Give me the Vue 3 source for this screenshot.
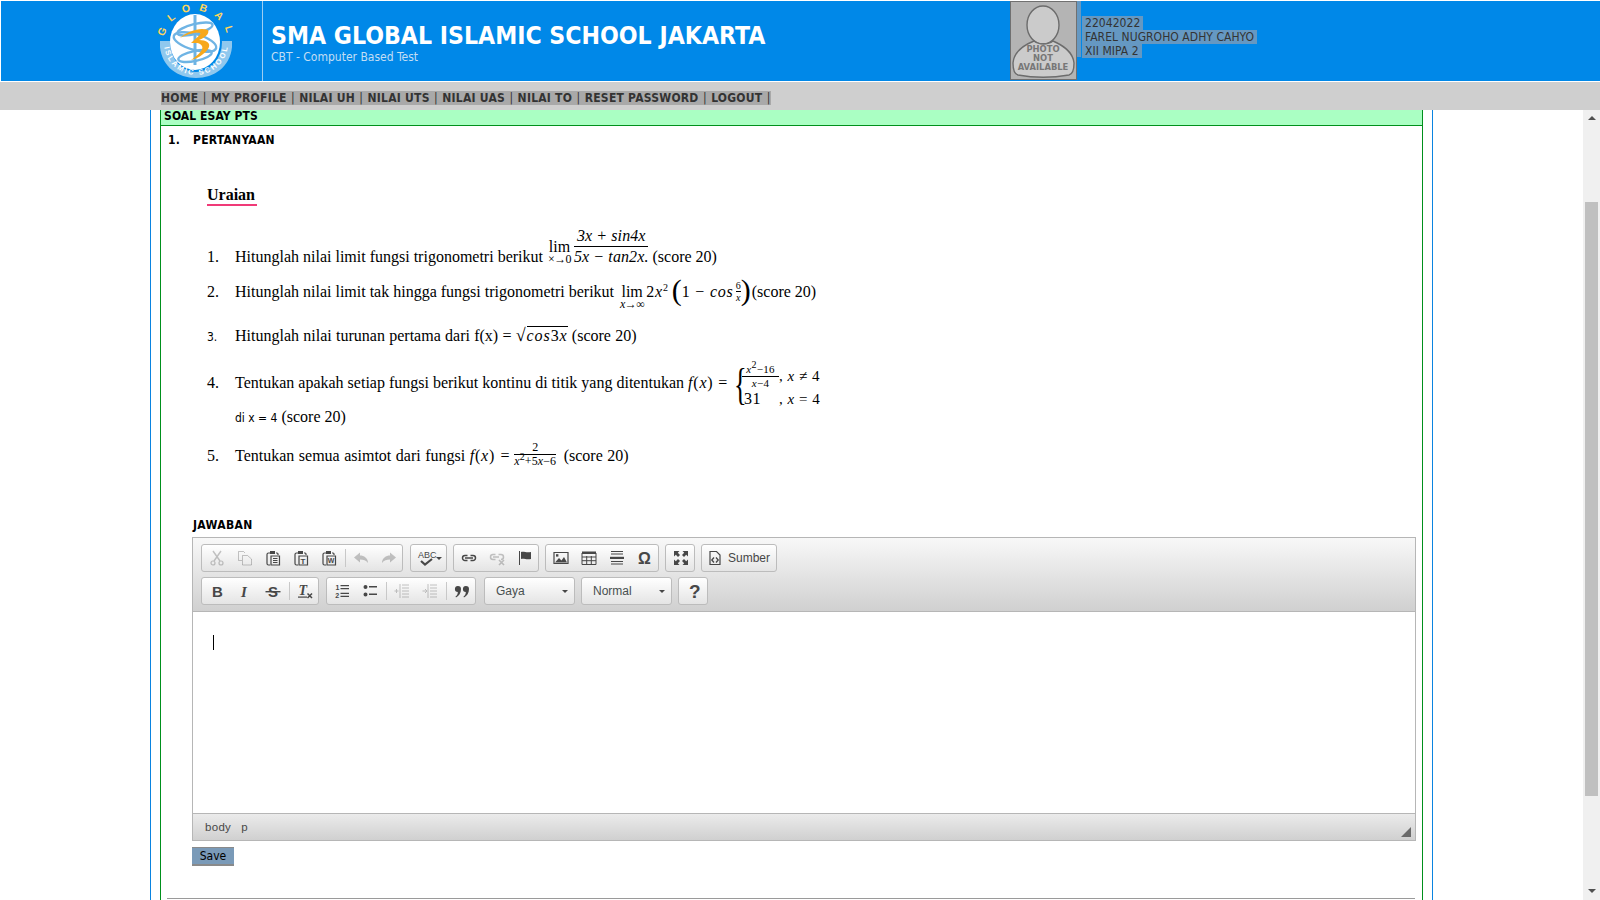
<template>
  <div class="page">
    <header class="top">
      <div class="logo-cell">
        <svg width="76" height="76" viewBox="0 0 76 76">
          <defs>
            <path id="arcTop" d="M4 38 A31 31 0 0 1 68 38" />
            <path id="arcBot" d="M6 38 A30 30 0 0 0 66 38" />
          </defs>
          <path d="M0 36 H72 V42 C70 62 54 73 36 73 C18 73 2 62 0 42 Z" fill="#8fc8ee" />
          <ellipse cx="36" cy="37" rx="26" ry="30" fill="#0088e8" />
          <ellipse cx="35" cy="37" rx="25" ry="28" fill="#fff" />
          <g fill="none" stroke="#6fb4e4" stroke-width="2.4">
            <ellipse cx="35" cy="24" rx="18" ry="5" transform="rotate(-14 35 24)" />
            <ellipse cx="35" cy="37" rx="22" ry="8" transform="rotate(16 35 37)" />
            <ellipse cx="35" cy="51" rx="17" ry="5" transform="rotate(-12 35 51)" />
            <path d="M35 10 V60" stroke-width="3" />
          </g>
          <path d="M20 33 C28 26 40 22 48 25 C50 29 44 33 39 35 C46 35 52 38 48 44 C44 50 36 54 31 55 C38 50 44 45 42 41 C40 37 35 38 31 38 C36 33 42 29 40 28 C34 27 26 30 20 33 Z" fill="#f7a81b" />
          <text font-family="Liberation Sans, sans-serif" font-size="10.5" font-weight="700" fill="#ffd65c" letter-spacing="8">
            <textPath href="#arcTop" startOffset="6">GLOBAL</textPath>
          </text>
          <text font-family="Liberation Sans, sans-serif" font-size="7.5" font-weight="700" fill="#fff" letter-spacing="1.6">
            <textPath href="#arcBot" startOffset="4" dominant-baseline="middle">ISLAMIC SCHOOL</textPath>
          </text>
        </svg>
      </div>
      <div class="brand">
        <h1>SMA GLOBAL ISLAMIC SCHOOL JAKARTA</h1>
        <p>CBT - Computer Based Test</p>
      </div>
      <div class="photo">
        <svg width="67" height="79" viewBox="0 0 67 79">
          <rect width="67" height="79" fill="#b4b4b4" />
          <rect x="0.5" y="0.5" width="66" height="78" fill="none" stroke="#707070" />
          <ellipse cx="33" cy="24" rx="16" ry="19" fill="#cbcbcb" stroke="#6c6c6c" stroke-width="1.4" />
          <path d="M24 40 C14 44 4 50 3 62 C3 68 4 73 8 74 C24 77 42 77 59 74 C63 73 64 68 64 62 C63 50 52 44 43 40 C38 44 29 44 24 40 Z" fill="#cbcbcb" stroke="#6c6c6c" stroke-width="1.4" />
          <g font-family="DejaVu Sans, sans-serif" font-size="8.4" font-weight="700" fill="#777" text-anchor="middle">
            <text x="33" y="51">PHOTO</text>
            <text x="33" y="60">NOT</text>
            <text x="33" y="69">AVAILABLE</text>
          </g>
        </svg>
      </div>
      <div class="strip"></div>
      <div class="user">
        <span>22042022</span>
        <span>FAREL NUGROHO ADHY CAHYO</span>
        <span>XII MIPA 2</span>
      </div>
    </header>

    <nav class="menu">
      <div class="menu-inner">
        <template v-for="item in menu" :key="item">
          <a>{{ item }}</a><i>|</i>
        </template>
      </div>
    </nav>

    <div class="view">
      <main class="scroller">
        <div class="frame">
          <div class="box">
            <div class="box-title">SOAL ESAY PTS</div>
            <div class="pertanyaan"><b>1.</b><b>PERTANYAAN</b></div>

            <div class="soal">
              <div class="heading"><span>Uraian</span></div>

              <div class="q q1">
                <span class="n">1.</span>
                <span class="t">Hitunglah nilai limit fungsi trigonometri berikut
                  <span class="lim l1">lim<small>×→0</small></span><span class="frac f1"><span><i>3x + sin4x</i></span><span><i>5x − tan2x.</i></span></span>
                  (score 20)</span>
              </div>

              <div class="q q2">
                <span class="n">2.</span>
                <span class="t">Hitunglah nilai limit tak hingga fungsi trigonometri berikut
                  <span class="lim l2">lim<small><i>x</i>→∞</small></span>
                  <span class="m">2<i>x</i><sup>2</sup></span>
                  <span class="paren open">(</span><span class="m">1 − <i>cos</i></span><span class="frac f2"><span>6</span><span><i>x</i></span></span><span class="paren close">)</span>
                  (score 20)</span>
              </div>

              <div class="q q3">
                <span class="n sans">3.</span>
                <span class="t wide">Hitunglah nilai turunan pertama dari f(x) =
                  <span class="root"><b>√</b><span class="rad"><i>cos</i>3<i>x</i></span></span>
                  (score 20)</span>
              </div>

              <div class="q q4">
                <span class="n">4.</span>
                <span class="t">Tentukan apakah setiap fungsi berikut kontinu di titik yang ditentukan
                  <span class="m"><i>f</i>(<i>x</i>) =</span>
                  <span class="cases">
                    <span class="brace">{</span>
                    <span class="case-grid">
                      <span class="frac f3"><span><i>x</i><sup>2</sup>−16</span><span><i>x</i>−4</span></span>
                      <span class="cond">, <i>x</i> ≠ 4</span>
                      <span class="num31">31</span>
                      <span class="cond">, <i>x</i> = 4</span>
                    </span>
                  </span>
                </span>
              </div>
              <div class="q q4b">
                <span class="n"></span>
                <span class="t"><span class="sans">di x = 4</span> (score 20)</span>
              </div>

              <div class="q q5">
                <span class="n">5.</span>
                <span class="t wide2">Tentukan semua asimtot dari fungsi
                  <span class="m"><i>f</i>(<i>x</i>) =</span>
                  <span class="frac f4"><span>2</span><span><i>x</i><sup>2</sup>+5<i>x</i>−6</span></span>
                  (score 20)</span>
              </div>
            </div>

            <div class="jawaban">JAWABAN</div>

            <div class="editor">
              <div class="toolbar">
                <div v-for="(row, r) in toolbar" :key="r" class="tool-row">
                  <template v-for="(group, g) in row" :key="g">
                    <div v-if="group.combo" class="combo">
                      <span>{{ group.combo }}</span><em></em>
                    </div>
                    <div v-else class="group" :class="{ first: g === 0 }">
                      <template v-for="(item, i) in group.items" :key="i">
                        <span v-if="item === 'sep'" class="sep"></span>
                        <span v-else class="btn" :class="{ off: item.off, arrow: item.arrow, label: item.label }">
                          <svg width="16" height="16" viewBox="0 0 16 16" v-html="icons[item.id]"></svg>
                          <em v-if="item.arrow"></em>
                          <span v-if="item.label">{{ item.label }}</span>
                        </span>
                      </template>
                    </div>
                  </template>
                </div>
              </div>
              <div class="editable"><div class="caret"></div></div>
              <div class="status">
                <span>body</span><span>p</span>
                <svg class="grip" width="10" height="10" viewBox="0 0 10 10"><path d="M10 0 V10 H0 Z" fill="#6a6a6a" /></svg>
              </div>
            </div>

            <button class="save">Save</button>
            <div class="rule"></div>
          </div>
        </div>
      </main>
      <aside class="scrollbar">
        <div class="up"></div>
        <div class="thumb"></div>
        <div class="down"></div>
      </aside>
    </div>
  </div>
</template>

<script setup>
const menu = ['HOME', 'MY PROFILE', 'NILAI UH', 'NILAI UTS', 'NILAI UAS', 'NILAI TO', 'RESET PASSWORD', 'LOGOUT']

const line = (d, w = 1.2) => `<path d="${d}" fill="none" stroke="#474747" stroke-width="${w}"/>`
const fill = (d) => `<path d="${d}" fill="#474747"/>`
const glyph = (t, x, y, size, extra = '') =>
  `<text x="${x}" y="${y}" font-family="Liberation Sans, sans-serif" font-size="${size}" font-weight="700" fill="#474747" ${extra}>${t}</text>`
const board = line('M5 3 H3.5 Q2 3 2 4.5 V13.5 Q2 15 3.5 15 H5 M11 3 H12 Q13 3 13 4 V5') + fill('M5 1 H10 V4 H5 Z')

const icons = {
  cut: line('M4 1 L11 11 M12 1 L5 11', 1.4) + line('M6 13 a2 2 0 1 1 -4 0 a2 2 0 1 1 4 0 M14 13 a2 2 0 1 1 -4 0 a2 2 0 1 1 4 0', 1.2),
  copy: line('M1.5 1.5 H6.5 L8 3 M1.5 1.5 V10.5 H5 M5.5 5.5 H10.5 L14.5 9 V15 H5.5 Z', 1),
  paste: board + line('M6 6 H14.5 V15 H6 Z', 1.2) + line('M8 8.5 H12.5 M8 10.5 H12.5 M8 12.5 H12.5', 1),
  pastetext: board + line('M6 6 H14.5 V15 H6 Z', 1.2) + glyph('T', 7.6, 13.6, 8),
  pasteword: board + line('M6 6 H14.5 V15 H6 Z', 1.2) + glyph('W', 6.8, 13.4, 7),
  undo: fill('M1 7.5 L7 2.5 V5.5 C11 5.5 15 8 15 13 C13 10 10.5 9.5 7 9.5 V12.5 Z'),
  redo: fill('M15 7.5 L9 2.5 V5.5 C5 5.5 1 8 1 13 C3 10 5.5 9.5 9 9.5 V12.5 Z'),
  spell: `<text x="0" y="8" font-family="Liberation Sans Narrow, Liberation Sans, sans-serif" font-size="9" fill="#474747">ABC</text>` + line('M3 11 L7 14.5 L14 9', 2.2),
  link: line('M6.5 5.5 H4 a2.5 2.5 0 0 0 0 5 H6.5 M9.5 5.5 H12 a2.5 2.5 0 0 1 0 5 H9.5', 1.5) + line('M4 8 H12', 1.5),
  unlink: line('M6.5 4.5 H4 a2.5 2.5 0 0 0 0 5 H6.5 M9.5 4.5 H12 a2.5 2.5 0 0 1 0 5', 1.5) + line('M4 7 H10', 1.5) + line('M10 10 L15 15 M15 10 L10 15', 1.6),
  flag: fill('M2 1 H3 V15 H2 Z M4 2 C7 1 9 3 14 2 V9 C9 10 7 8 4 9 Z'),
  image: line('M1 2.5 H15 V13.5 H1 Z', 1.2) + fill('M2 12.5 L6 8 L8.5 10.5 L11 7 L14 12.5 Z') + fill('M3 4.2 h2.4 v2.4 h-2.4 Z'),
  table: line('M1 3 H15 V14.5 H1 Z M1 7 H15 M1 10.7 H15 M5.7 6 V14.5 M10.3 6 V14.5', 1) + fill('M1 1.5 H15 V4 H1 Z'),
  hr: line('M2 1.5 H14 M2 4 H14 M2 11.5 H14 M2 14 H14', 1) + fill('M1 6.8 H15 V9 H1 Z'),
  omega: glyph('Ω', 1, 14, 16),
  max: fill('M1 1 H6.5 L4.8 2.7 L7 4.9 L5 6.9 L2.8 4.7 L1 6.5 Z M15 1 H9.5 L11.2 2.7 L9 4.9 L11 6.9 L13.2 4.7 L15 6.5 Z M1 15 H6.5 L4.8 13.3 L7 11.1 L5 9.1 L2.8 11.3 L1 9.5 Z M15 15 H9.5 L11.2 13.3 L9 11.1 L11 9.1 L13.2 11.3 L15 9.5 Z'),
  source: line('M3 1.5 H9.5 L13 5 V14.5 H3 Z', 1.2) + line('M7 7.5 L4.8 10 L7 12.5 M9 7.5 L11.2 10 L9 12.5', 1.3),
  bold: glyph('B', 3, 13.5, 15),
  italic: `<text x="4" y="13.5" font-family="Liberation Serif, serif" font-size="15" font-weight="700" font-style="italic" fill="#474747">I</text>`,
  strike: glyph('S', 3, 13.5, 15) + fill('M0.5 8 H15.5 V9.4 H0.5 Z'),
  clear: `<text x="1.5" y="12" font-family="Liberation Serif, serif" font-size="14" font-weight="700" font-style="italic" fill="#474747">T</text>` + fill('M1 13.5 H10 V14.7 H1 Z') + line('M10.5 10.5 L15 15 M15 10.5 L10.5 15', 1.5),
  ol: glyph('1', 1.5, 7, 7) + glyph('2', 1.2, 14.5, 7) + fill('M6.5 2 H15 V3.2 H6.5 Z M6.5 5 H15 V6.2 H6.5 Z M6.5 9.8 H15 V11 H6.5 Z M6.5 12.8 H15 V14 H6.5 Z'),
  ul: fill('M1.5 4 a2 2 0 1 1 4 0 a2 2 0 1 1 -4 0 Z M1.5 11.5 a2 2 0 1 1 4 0 a2 2 0 1 1 -4 0 Z M7 3 H15 V4.4 H7 Z M7 10.5 H15 V11.9 H7 Z'),
  outdent: line('M8 2 H15 M8 5 H15 M8 8 H15 M8 11 H15 M8 14 H15 M6 1 V15', 1) + line('M0.5 8 H4.5 M2.5 6 V10', 1),
  indent: line('M8 2 H15 M8 5 H15 M8 8 H15 M8 11 H15 M8 14 H15 M6 1 V15', 1) + line('M0.5 8 H4.5 M3 6 L5 8 L3 10', 1),
  quote: fill('M4 3 a3 3 0 0 1 3 3 C7 10 5 13 2 14.5 L1.5 13.5 C3 12.5 3.8 11 3.8 9 A3 3 0 0 1 4 3 Z M12 3 a3 3 0 0 1 3 3 C15 10 13 13 10 14.5 L9.5 13.5 C11 12.5 11.8 11 11.8 9 A3 3 0 0 1 12 3 Z'),
  help: glyph('?', 3, 15, 19),
}

const toolbar = [
  [
    { items: [{ id: 'cut', off: true }, { id: 'copy', off: true }, { id: 'paste' }, { id: 'pastetext' }, { id: 'pasteword' }, 'sep', { id: 'undo', off: true }, { id: 'redo', off: true }] },
    { items: [{ id: 'spell', arrow: true }] },
    { items: [{ id: 'link' }, { id: 'unlink', off: true }, { id: 'flag' }] },
    { items: [{ id: 'image' }, { id: 'table' }, { id: 'hr' }, { id: 'omega' }] },
    { items: [{ id: 'max' }] },
    { items: [{ id: 'source', label: 'Sumber' }] },
  ],
  [
    { items: [{ id: 'bold' }, { id: 'italic' }, { id: 'strike' }, 'sep', { id: 'clear' }] },
    { items: [{ id: 'ol' }, { id: 'ul' }, 'sep', { id: 'outdent', off: true }, { id: 'indent', off: true }, 'sep', { id: 'quote' }] },
    { combo: 'Gaya' },
    { combo: 'Normal' },
    { items: [{ id: 'help' }] },
  ],
]
</script>

<style>
html, body { margin: 0; height: 100%; overflow: hidden; background: #fff; }
</style>

<style scoped>
.page {
  height: 900px;
  display: flex;
  flex-direction: column;
  font-family: "DejaVu Sans Condensed", "DejaVu Sans", sans-serif;
  font-size: 12px;
  color: #000;
  overflow: hidden;
}

.top {
  flex: none;
  height: 80px;
  margin: 1px 0 1px 1px;
  background: #0088e8;
  display: flex;
}
.logo-cell {
  width: 262px;
  box-sizing: border-box;
  padding: 4px 0 0 159px;
  border-right: 1px solid #9ccdf2;
}
.logo-cell svg { overflow: visible; }
.brand { width: 747px; padding: 20px 0 0 8px; box-sizing: border-box; color: #fff; }
.brand h1 { margin: 0; font-size: 24.6px; line-height: 29px; font-weight: 700; white-space: nowrap; }
.brand p { margin: 0; font-size: 12px; line-height: 14px; color: #c3def4; }
.photo { width: 67px; height: 79px; }
.photo svg { display: block; }
.strip { width: 4px; height: 56px; background: #6598c2; }
.user {
  display: flex;
  flex-direction: column;
  align-items: flex-start;
  align-self: flex-start;
  margin-top: 15px;
  padding-left: 1px;
  color: #333;
  line-height: 14px;
  letter-spacing: 0.05px;
}
.user span { background: #6598c2; padding: 0 3px; }

.menu { flex: none; height: 28px; background: #cfcfcf; padding: 9px 0 0 161px; box-sizing: border-box; }
.menu-inner {
  display: inline-flex;
  background: #a9a9a9;
  line-height: 14px;
  height: 14px;
  font-weight: 700;
  font-size: 12px;
  letter-spacing: 0.24px;
  color: #333;
  white-space: nowrap;
}
.menu-inner i { font-style: normal; font-weight: 400; margin: 0 4.35px; }
.menu-inner i:last-child { margin-right: 0; }

.view { flex: 1; min-height: 0; display: flex; }
.scroller { flex: 1; min-width: 0; overflow: hidden; padding-left: 150px; }
.frame {
  width: 1283px;
  box-sizing: border-box;
  height: 100%;
  border-left: 1px solid #0a84e0;
  border-right: 1px solid #0a84e0;
  padding: 0 9px;
}
.box {
  height: 100%;
  box-sizing: border-box;
  border-left: 1px solid #00901c;
  border-right: 1px solid #00901c;
}
.box-title {
  height: 15px;
  line-height: 12px;
  background: #aaffc3;
  border-bottom: 1px solid #00901c;
  padding-left: 3px;
  font-weight: 700;
  letter-spacing: 0.1px;
}
.pertanyaan { display: flex; padding: 7px 0 0 7px; line-height: 15px; letter-spacing: 0.25px; }
.pertanyaan b:first-child { width: 25px; }

.soal { font-family: "Liberation Serif", serif; font-size: 16px; padding-left: 46px; }
.heading { margin-top: 36px; font-weight: 700; line-height: 22px; height: 22px; }
.heading span { display: inline-block; border-bottom: 2px solid #f03a78; padding-right: 2px; height: 20px; }

.q { display: flex; align-items: baseline; line-height: 20px; white-space: nowrap; }
.n { width: 28px; flex: none; }
.sans { font-family: "DejaVu Sans Condensed", sans-serif; font-size: 12px; }
.t { word-spacing: 0; }
.wide { word-spacing: 0.3px; }
.wide2 { word-spacing: 0.5px; }
.m { letter-spacing: 0.8px; }
.m i, .frac i, .cond i, .root i { font-style: italic; }
.m sup, .frac sup { font-size: 10px; line-height: 0; }

.q1 { margin-top: 20px; }
.q2 { margin-top: 13px; }
.q3 { margin-top: 16px; }
.q4 { margin-top: 21px; }
.q4b { margin-top: 7px; }
.q5 { margin-top: 13px; }

.lim { display: inline-flex; flex-direction: column; align-items: center; vertical-align: 10px; line-height: 14px; }
.lim small { font-size: 12px; line-height: 10px; letter-spacing: -0.6px; }
.lim.l1 { margin: 0 3px 0 1px; }
.lim.l2 { vertical-align: 0; margin: 0 2px; }
.frac { display: inline-flex; flex-direction: column; align-items: center; letter-spacing: 0.1px; word-spacing: 0; }
.frac > span + span { border-top: 1px solid #000; align-self: stretch; text-align: center; }
.f1 { vertical-align: 21px; line-height: 20px; }
.f2 { vertical-align: 8px; font-size: 10px; line-height: 11px; margin-left: 2px; }
.f3 { vertical-align: 0; font-size: 11px; line-height: 13px; letter-spacing: 0.3px; }
.f4 { vertical-align: 10px; font-size: 12px; line-height: 13px; margin: 0 3px 0 4px; }
.paren { font-size: 30px; font-weight: 100; line-height: 20px; vertical-align: -3px; }
.paren.open { margin: 0 0 0 3px; }
.paren.close { margin-right: -3px; }
.root { letter-spacing: 0.9px; }
.root b { font-weight: 400; font-size: 18px; }
.rad { border-top: 1px solid #000; }
.cases { display: inline-flex; align-items: center; vertical-align: middle; height: 44px; margin: -12px 0 0 4px; transform: translateY(7px); }
.brace { font-size: 44px; line-height: 44px; font-weight: 100; transform: scaleX(0.6); width: 10px; }
.case-grid { display: grid; grid-template-columns: 37px auto; align-items: center; line-height: 18px; }
.num31 { font-family: "Liberation Serif", serif; letter-spacing: 0.5px; padding-left: 2px; }
.cond { font-size: 15px; letter-spacing: 0.5px; }

.jawaban { margin: 50px 0 0 32px; font-weight: 700; line-height: 15px; letter-spacing: 0.35px; }

.editor {
  margin: 4px 0 0 31px;
  width: 1224px;
  box-sizing: border-box;
  border: 1px solid #b6b6b6;
  height: 304px;
  display: flex;
  flex-direction: column;
  font-family: "Liberation Sans", sans-serif;
}
.toolbar {
  flex: none;
  height: 74px;
  box-sizing: border-box;
  padding: 6px 0 0 8px;
  background: linear-gradient(#f8f8f8, #d0d0d0);
  border-bottom: 1px solid #b6b6b6;
}
.tool-row { display: flex; gap: 6px; height: 28px; margin-bottom: 5px; }
.group, .combo {
  box-sizing: border-box;
  display: flex;
  align-items: center;
  height: 28px;
  border: 1px solid #bcbcbc;
  border-radius: 3px;
  background: linear-gradient(#ffffff, #e4e4e4);
}
.group { padding-left: 1px; }
.group > :last-child { margin-right: -1px; }
.first { margin-right: 1px; }
.btn { width: 28px; height: 26px; display: flex; align-items: center; justify-content: center; flex: none; }
.btn svg { flex: none; overflow: visible; }
.btn.off svg { opacity: 0.3; }
.btn.arrow { width: 35px; gap: 2px; }
.btn.arrow em { border-top: 3px solid #474747; border-left: 3px solid transparent; border-right: 3px solid transparent; }
.btn.label { width: 74px; justify-content: flex-start; padding-left: 4px; box-sizing: border-box; gap: 5px; color: #474747; }
.sep { width: 1px; height: 18px; background: #c8c8c8; margin: 0 1px 0 2px; flex: none; }
.combo {
  width: 91px;
  margin-left: 2px;
  padding: 0 6px 0 11px;
  justify-content: space-between;
  color: #484f4f;
}
.combo + .combo, .combo + .group { margin-left: 0; }
.combo em { border-top: 3px solid #474747; border-left: 3px solid transparent; border-right: 3px solid transparent; }

.editable { flex: 1; background: #fff; padding: 23px 0 0 20px; }
.caret { width: 1px; height: 15px; background: #000; }
.status {
  flex: none;
  height: 27px;
  box-sizing: border-box;
  border-top: 1px solid #b6b6b6;
  background: linear-gradient(#ebebeb, #d0d0d0);
  padding-left: 12px;
  display: flex;
  align-items: center;
  gap: 10px;
  font-size: 11.5px;
  letter-spacing: 0.3px;
  color: #484848;
  position: relative;
}
.grip { position: absolute; right: 4px; bottom: 3px; }

.save {
  display: block;
  margin: 6px 0 0 31px;
  width: 42px;
  height: 19px;
  padding: 0;
  background: #7a9ab8;
  border: 0;
  border-top: 1px solid #8a8a8a;
  border-bottom: 2px solid #8a8a8a;
  font: 12px "DejaVu Sans Condensed", sans-serif;
  color: #000;
}
.rule { margin: 32px 0 0 6px; width: 1248px; height: 1px; background: #9a9a9a; }

.scrollbar { flex: none; width: 17px; background: #f0f0f0; display: flex; flex-direction: column; align-items: center; position: relative; }
.up, .down { position: absolute; border-left: 4px solid transparent; border-right: 4px solid transparent; }
.up { top: 6px; border-bottom: 4px solid #505050; }
.down { bottom: 7px; border-top: 4px solid #505050; }
.thumb { width: 13px; height: 594px; margin-top: 92px; background: #c0c0c0; }
</style>
